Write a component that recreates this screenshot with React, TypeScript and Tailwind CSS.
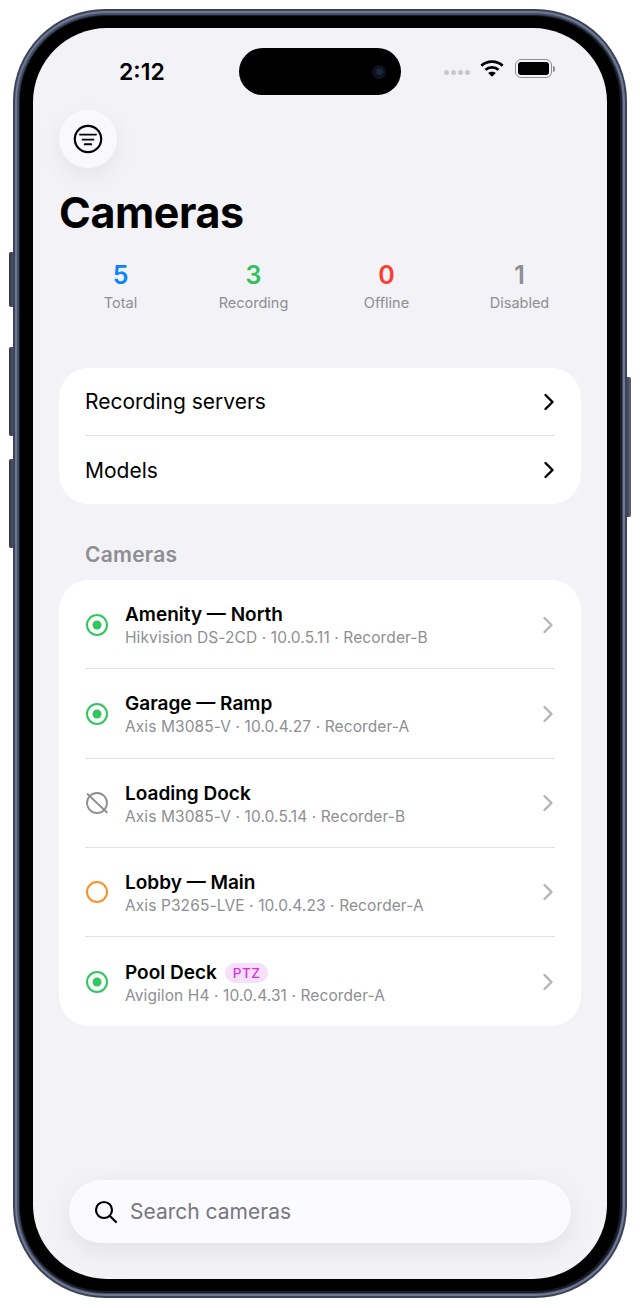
const cameras = [
  { name: 'Amenity — North', meta: 'Hikvision DS-2CD · 10.0.5.11 · Recorder-B', status: 'on' },
  { name: 'Garage — Ramp', meta: 'Axis M3085-V · 10.0.4.27 · Recorder-A', status: 'on' },
  { name: 'Loading Dock', meta: 'Axis M3085-V · 10.0.5.14 · Recorder-B', status: 'off' },
  { name: 'Lobby — Main', meta: 'Axis P3265-LVE · 10.0.4.23 · Recorder-A', status: 'idle' },
  { name: 'Pool Deck', meta: 'Avigilon H4 · 10.0.4.31 · Recorder-A', status: 'on', badge: 'PTZ' },
];

const stats = [
  { value: '5', label: 'Total', color: 'text-[#0a84ff]' },
  { value: '3', label: 'Recording', color: 'text-[#30c15c]' },
  { value: '0', label: 'Offline', color: 'text-[#ff3b30]' },
  { value: '1', label: 'Disabled', color: 'text-[#8e8e93]' },
];

function StatusIcon({ status }: { status: string }) {
  if (status === 'on') {
    return (
      <svg width="24" height="24" viewBox="0 0 24 24" fill="none">
        <circle cx="12" cy="12" r="10" stroke="#30c85e" strokeWidth="2" />
        <circle cx="12" cy="12" r="4.5" fill="#30c85e" />
      </svg>
    );
  }
  if (status === 'idle') {
    return (
      <svg width="24" height="24" viewBox="0 0 24 24" fill="none">
        <circle cx="12" cy="12" r="10" stroke="#ff9027" strokeWidth="2" />
      </svg>
    );
  }
  return (
    <svg width="24" height="24" viewBox="0 0 24 24" fill="none" stroke="#8e8e93" strokeWidth="1.8" strokeLinecap="round">
      <circle cx="12" cy="12" r="10" />
      <path d="M2.5 3 L22 21.5" />
    </svg>
  );
}

function Chevron({ color, width }: { color: string; width: number }) {
  return (
    <svg width="12" height="18" viewBox="0 0 12 18" fill="none" stroke={color} strokeWidth={width} strokeLinecap="round" strokeLinejoin="round">
      <path d="M2.5 2 L9.5 9 L2.5 16" />
    </svg>
  );
}

function SideButton({ className }: { className: string }) {
  return <div className={`absolute w-[6px] rounded-[2px] bg-gradient-to-r from-[#2c3244] to-[#5f687f] ${className}`} />;
}

export default function App() {
  return (
    <div className="relative h-[1308px] w-[640px] bg-white font-['Inter',sans-serif]">
      <SideButton className="left-[9px] top-[252px] h-[55px]" />
      <SideButton className="left-[9px] top-[347px] h-[89px]" />
      <SideButton className="left-[9px] top-[459px] h-[89px]" />
      <SideButton className="left-[625px] top-[377px] h-[140px]" />

      <div className="absolute left-[13px] top-[9px] h-[1289px] w-[614px] rounded-[92px] bg-[#3b4358] p-[2px]">
        <div className="h-full w-full rounded-[90px] bg-[#6f7994] p-[2px]">
          <div className="h-full w-full rounded-[88px] bg-[#454d63] p-[1.5px]">
            <div className="h-full w-full rounded-[86px] bg-[#1a1d29] p-[1.5px]">
              <div className="h-full w-full rounded-[85px] bg-black px-[13px] py-[12px]">
                <div className="relative flex h-full w-full flex-col overflow-hidden rounded-[74px] bg-[#f2f2f7] px-[26px]">
                  {/* dynamic island */}
                  <div className="absolute left-[206px] top-[20px] flex h-[47px] w-[162px] items-center justify-end rounded-full bg-black pr-[15px]">
                    <div className="flex h-[14px] w-[14px] items-center justify-center rounded-full bg-[#0e1220]">
                      <div className="h-[7px] w-[7px] rounded-full bg-[#1c2540]" />
                    </div>
                  </div>

                  {/* status bar */}
                  <div className="flex h-[82px] items-start justify-between pl-[60px] pr-[26px] pt-[30px]">
                    <span className="text-[23px] font-semibold leading-[28px] text-black">2:12</span>
                    <div className="flex items-center pt-[1px]">
                      <div className="mr-[10px] mt-[7px] flex gap-[2px]">
                        <div className="h-[5px] w-[5px] rounded-full bg-[#c7c7cc]" />
                        <div className="h-[5px] w-[5px] rounded-full bg-[#c7c7cc]" />
                        <div className="h-[5px] w-[5px] rounded-full bg-[#c7c7cc]" />
                        <div className="h-[5px] w-[5px] rounded-full bg-[#c7c7cc]" />
                      </div>
                      <svg width="24" height="19" viewBox="0 0 26 20" fill="none" stroke="#000" strokeWidth="3">
                        <path d="M1.5 7 C7.5 1 18.5 1 24.5 7" />
                        <path d="M6 11.5 C9.5 8 16.5 8 20 11.5" />
                        <path d="M13 19 L8.8 15 C11 13 15 13 17.2 15 Z" fill="#000" stroke="none" />
                      </svg>
                      <div className="ml-[11px] flex items-center">
                        <div className="h-[19px] w-[37px] rounded-[6px] border-[1.5px] border-[#8e8e93] p-[2px]">
                          <div className="h-full w-full rounded-[3px] bg-black" />
                        </div>
                        <div className="ml-[1px] h-[6px] w-[2px] rounded-r-full bg-[#8e8e93]" />
                      </div>
                    </div>
                  </div>

                  {/* menu button */}
                  <button className="flex h-[58px] w-[58px] items-center justify-center rounded-full bg-[#f9f9fd] shadow-[0_8px_24px_rgba(0,0,0,0.06)]">
                    <svg width="30" height="30" viewBox="0 0 30 30" fill="none" stroke="#000" strokeLinecap="round">
                      <circle cx="15" cy="15" r="13.2" strokeWidth="2.2" />
                      <path d="M7 10.6 H23" strokeWidth="1.9" />
                      <path d="M9.5 15.6 H20.5" strokeWidth="1.9" />
                      <path d="M11.7 20.3 H18.3" strokeWidth="1.9" />
                    </svg>
                  </button>

                  <h1 className="mt-[16px] text-[43px] font-bold leading-[56px] tracking-[-0.4px] text-black">Cameras</h1>

                  {/* stats */}
                  <div className="-mx-[5px] mt-[20px] grid grid-cols-4">
                    {stats.map((s) => (
                      <div key={s.label} className="flex flex-col items-center">
                        <span className={`text-[25px] font-semibold leading-[30px] ${s.color}`}>{s.value}</span>
                        <span className="mt-[2px] text-[14.5px] leading-[22px] text-[#8e8e93]">{s.label}</span>
                      </div>
                    ))}
                  </div>

                  {/* links */}
                  <div className="mt-[54px] rounded-[30px] bg-white px-[26px]">
                    <div className="flex h-[68px] items-center justify-between border-b border-[#e2e2e6]">
                      <span className="pt-[1px] text-[21px] text-black">Recording servers</span>
                      <Chevron color="#000" width={2.4} />
                    </div>
                    <div className="flex h-[68px] items-center justify-between">
                      <span className="pt-[1px] text-[21px] text-black">Models</span>
                      <Chevron color="#000" width={2.4} />
                    </div>
                  </div>

                  <div className="mt-[37px] pl-[26px] text-[21px] font-semibold leading-[28px] tracking-[0.25px] text-[#8e8e93]">Cameras</div>

                  {/* camera list */}
                  <div className="mt-[11px] rounded-[30px] bg-white pl-[26px] pr-[26px]">
                    {cameras.map((c, i) => (
                      <div key={c.name} className={`flex h-[89.25px] items-center pt-[1px] ${i < cameras.length - 1 ? 'border-b border-[#e2e2e6]' : ''}`}>
                        <div className="mr-[15px] w-[25px] shrink-0">
                          <StatusIcon status={c.status} />
                        </div>
                        <div className="min-w-0 flex-1">
                          <div className="flex items-center pt-[1px]">
                            <span className="text-[19px] font-semibold leading-[26px] text-black">{c.name}</span>
                            {c.badge && (
                              <span className="ml-[8px] rounded-full bg-[#f6e0fa] px-[8px] text-[13.5px] font-medium leading-[20px] tracking-[0.5px] text-[#d62fe6]">
                                {c.badge}
                              </span>
                            )}
                          </div>
                          <div className="text-[15.5px] leading-[20px] tracking-[0.1px] text-[#8e8e93]">{c.meta}</div>
                        </div>
                        <div className="mr-[1px]">
                          <Chevron color="#b4b4b9" width={2.4} />
                        </div>
                      </div>
                    ))}
                  </div>

                  {/* search */}
                  <div className="mx-[10px] mb-[36px] mt-auto flex h-[63px] items-center rounded-full bg-[#fafaff] pl-[25px] shadow-[0_8px_28px_rgba(0,0,0,0.07)]">
                    <svg width="24" height="24" viewBox="0 0 24 24" fill="none" stroke="#000" strokeWidth="2.2" strokeLinecap="round">
                      <circle cx="10" cy="10" r="8" />
                      <path d="M16 16 L22 22" />
                    </svg>
                    <span className="ml-[12px] text-[21px] text-[#77777c]">Search cameras</span>
                  </div>
                </div>
              </div>
            </div>
          </div>
        </div>
      </div>
    </div>
  );
}
